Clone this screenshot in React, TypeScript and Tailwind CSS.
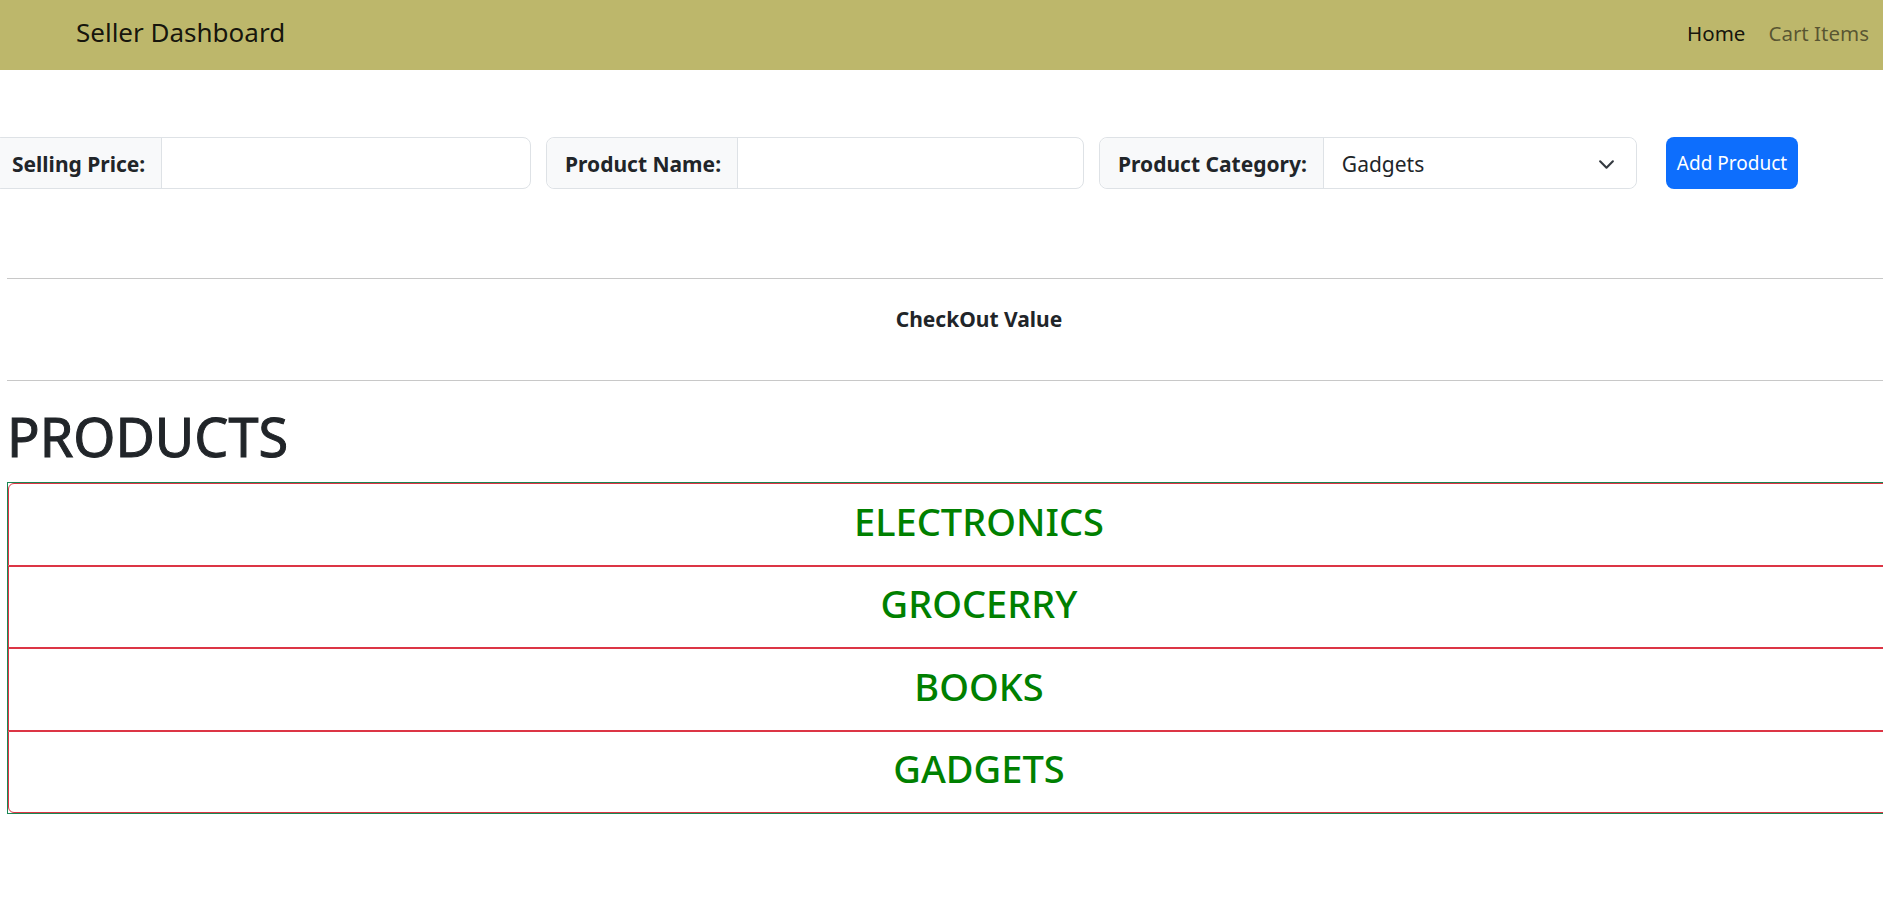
import React, { useState } from 'react';

const categories = ['ELECTRONICS', 'GROCERRY', 'BOOKS', 'GADGETS'];

const InputGroup = ({ label, children, first }: { label: string; children: React.ReactNode; first?: boolean }) => (
  <div className={`flex h-[52px] w-[538px] shrink-0 rounded-[8px] border border-[#dee2e6] ${first ? '-ml-[7px]' : ''}`}>
    <span className="flex items-center rounded-l-[8px] border-r border-[#dee2e6] bg-[#f8f9fa] pt-[3px] pl-[18px] pr-[16px] text-[21px] font-bold text-[#212529]">
      {label}
    </span>
    {children}
  </div>
);

const App = () => {
  const [price, setPrice] = useState('');
  const [name, setName] = useState('');
  const [category, setCategory] = useState('Gadgets');

  return (
    <div className="min-h-screen overflow-x-hidden bg-white font-['Noto_Sans',sans-serif] text-[#212529]">
      <nav className="flex h-[70px] items-center justify-between bg-[#bdb76b] pb-[5px] pl-[76px] pr-[14px]">
        <span className="text-[26px] text-black/90">Seller Dashboard</span>
        <div className="flex gap-[23px] pt-[2px] text-[20.5px]">
          <a className="text-black/90">Home</a>
          <a className="text-black/55">Cart Items</a>
        </div>
      </nav>

      <div className="mt-[67px] flex gap-[15px]">
        <InputGroup label="Selling Price:" first>
          <input
            type="text"
            value={price}
            onChange={(e) => setPrice(e.target.value)}
            className="min-w-0 flex-1 rounded-r-[8px] px-4 text-[21px] outline-none"
          />
        </InputGroup>
        <InputGroup label="Product Name:">
          <input
            type="text"
            value={name}
            onChange={(e) => setName(e.target.value)}
            className="min-w-0 flex-1 rounded-r-[8px] px-4 text-[21px] outline-none"
          />
        </InputGroup>
        <InputGroup label="Product Category:">
          <div className="relative flex flex-1 items-center">
            <select
              value={category}
              onChange={(e) => setCategory(e.target.value)}
              className="h-full w-full appearance-none rounded-r-[8px] bg-white pt-[3px] pl-[18px] pr-10 text-[21px] text-[#212529] outline-none"
            >
              <option>Electronics</option>
              <option>Grocerry</option>
              <option>Books</option>
              <option>Gadgets</option>
            </select>
            <svg className="pointer-events-none absolute right-[21px] top-[18px] h-[17px] w-[17px]" viewBox="0 0 16 16" fill="none">
              <path d="M2 5l6 6 6-6" stroke="#343a40" strokeWidth="2" strokeLinecap="round" strokeLinejoin="round" />
            </svg>
          </div>
        </InputGroup>
        <button className="ml-[14px] h-[52px] w-[132px] shrink-0 rounded-[8px] bg-[#0d6efd] pt-[1px] text-[19px] text-white">
          Add Product
        </button>
      </div>

      <div className="w-[1958px] px-[7px]">
        <hr className="mt-[89px] border-t border-[#c8c8c8]" />
        <p className="mt-[24px] mb-[44px] text-center text-[21px] font-bold leading-[33px]">CheckOut Value</p>
        <hr className="border-t border-[#c8c8c8]" />

        <h1 className="mt-[22px] mb-[13px] text-[54px] font-normal leading-[66px] [-webkit-text-stroke:1px_#212529]">PRODUCTS</h1>

        <div className="border border-[#198754]">
          {categories.map((c, i) => (
            <div
              key={c}
              className={`flex h-[82.5px] items-center justify-center border border-[#dc3545] ${i === 0 ? 'rounded-t-[6px]' : ''} ${i === categories.length - 1 ? 'rounded-b-[6px]' : ''}`}
            >
              <h2 className="-mt-[6px] text-[38px] font-medium text-[#008000]">{c}</h2>
            </div>
          ))}
        </div>
      </div>
    </div>
  );
};

export default App;
